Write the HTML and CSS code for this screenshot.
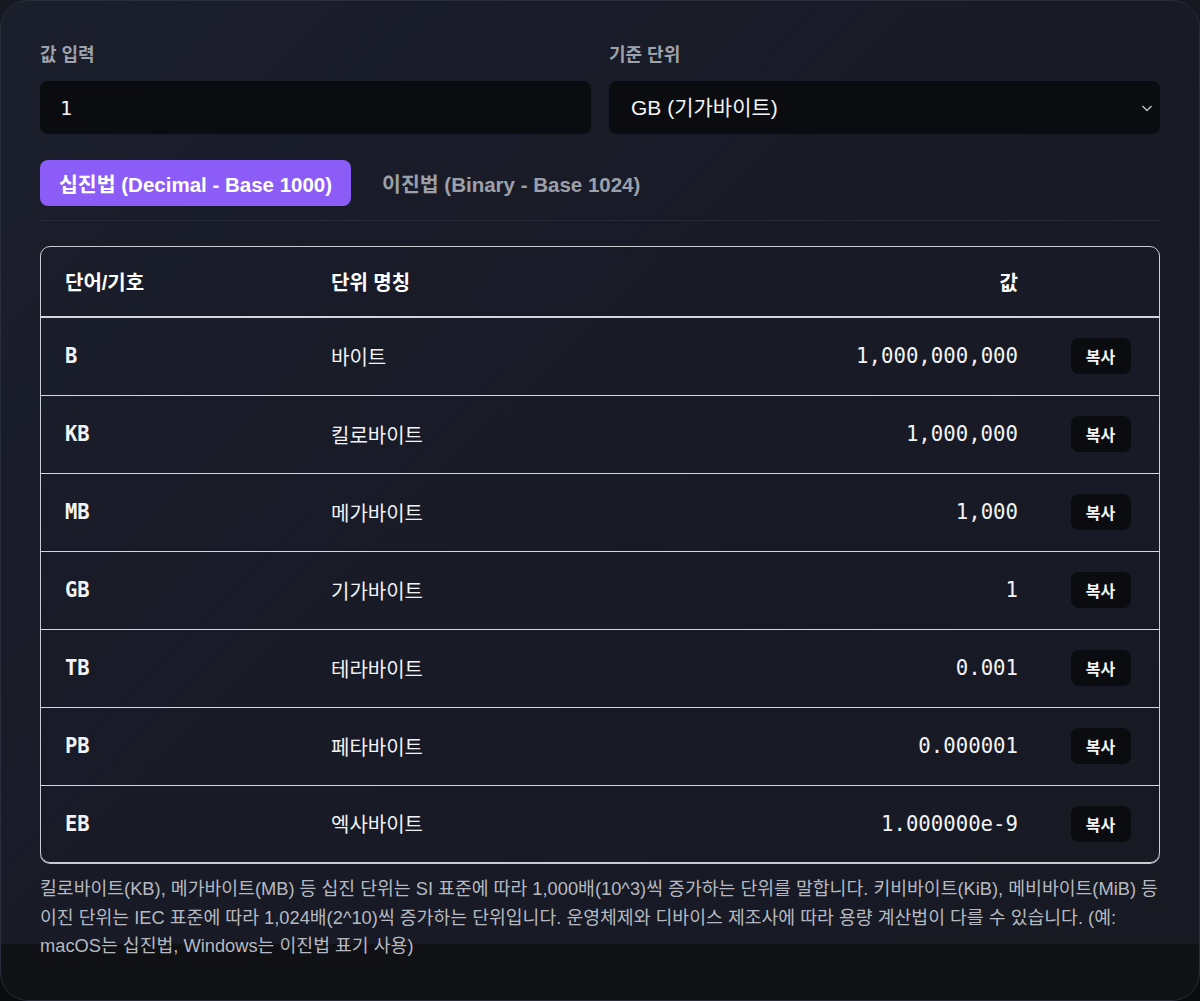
FILE: index.html
```html
<!DOCTYPE html>
<html lang="ko">
<head>
    <meta charset="UTF-8">
    <meta name="viewport" content="width=device-width, initial-scale=1.0">
    <title>데이터 단위 변환기</title>
    <link rel="stylesheet" href="styles.css">
</head>
<body>
    <div class="panel">
        <div class="fields">
            <div class="field">
                <label for="amount">값 입력</label>
                <input id="amount" class="control" type="text" value="1">
            </div>
            <div class="field">
                <label for="baseUnit">기준 단위</label>
                <div class="select-wrap">
                    <select id="baseUnit" class="control">
                        <option>B (바이트)</option>
                        <option>KB (킬로바이트)</option>
                        <option>MB (메가바이트)</option>
                        <option selected>GB (기가바이트)</option>
                        <option>TB (테라바이트)</option>
                        <option>PB (페타바이트)</option>
                        <option>EB (엑사바이트)</option>
                    </select>
                    <svg class="chevron" width="14" height="14" viewBox="0 0 14 14"><path d="M2.5 5 L7 9.5 L11.5 5" fill="none" stroke="#c4c6cc" stroke-width="1.3"/></svg>
                </div>
            </div>
        </div>

        <div class="tabs">
            <button class="tab active">십진법 (Decimal - Base 1000)</button>
            <button class="tab">이진법 (Binary - Base 1024)</button>
        </div>

        <div class="table-wrap">
            <table>
                <thead>
                    <tr>
                        <th class="col-sym">단어/기호</th>
                        <th class="col-name">단위 명칭</th>
                        <th class="col-val">값</th>
                        <th class="col-copy"></th>
                    </tr>
                </thead>
                <tbody>
                    <tr><td class="sym">B</td><td>바이트</td><td class="val">1,000,000,000</td><td class="copy"><button>복사</button></td></tr>
                    <tr><td class="sym">KB</td><td>킬로바이트</td><td class="val">1,000,000</td><td class="copy"><button>복사</button></td></tr>
                    <tr><td class="sym">MB</td><td>메가바이트</td><td class="val">1,000</td><td class="copy"><button>복사</button></td></tr>
                    <tr><td class="sym">GB</td><td>기가바이트</td><td class="val">1</td><td class="copy"><button>복사</button></td></tr>
                    <tr><td class="sym">TB</td><td>테라바이트</td><td class="val">0.001</td><td class="copy"><button>복사</button></td></tr>
                    <tr><td class="sym">PB</td><td>페타바이트</td><td class="val">0.000001</td><td class="copy"><button>복사</button></td></tr>
                    <tr><td class="sym">EB</td><td>엑사바이트</td><td class="val">1.000000e-9</td><td class="copy"><button>복사</button></td></tr>
                </tbody>
            </table>
        </div>

        <p class="note">킬로바이트(KB), 메가바이트(MB) 등 십진 단위는 SI 표준에 따라 1,000배(10^3)씩 증가하는 단위를 말합니다. 키비바이트(KiB), 메비바이트(MiB) 등 이진 단위는 IEC 표준에 따라 1,024배(2^10)씩 증가하는 단위입니다. 운영체제와 디바이스 제조사에 따라 용량 계산법이 다를 수 있습니다. (예: macOS는 십진법, Windows는 이진법 표기 사용)</p>
    </div>
</body>
</html>
```

FILE: styles.css
```css
* {
    box-sizing: border-box;
}
body {
    margin: 0;
    background: linear-gradient(#171922, #0b0c0f);
    font-family: "Liberation Sans", "Noto Sans CJK KR", sans-serif;
    color: #f2f3f5;
}
.panel {
    height: 1001px;
    border: 1px solid #2a2d3a;
    border-radius: 28px;
    padding: 42px 39px 0;
    background-color: #101115;
    background-image: linear-gradient(135deg, #1b1e2b 0%, #181b26 50%, #171a23 100%);
    background-size: 100% 943px;
    background-repeat: no-repeat;
}
.fields {
    display: grid;
    grid-template-columns: 1fr 1fr;
    gap: 18px;
}
.field label {
    display: block;
    font-size: 18px;
    font-weight: bold;
    line-height: 24px;
    color: #9ea2ad;
    margin-bottom: 14px;
}
.control {
    display: block;
    width: 100%;
    height: 53px;
    border: none;
    border-radius: 8px;
    background: #0b0c10;
    color: #f4f5f7;
    font-family: "Liberation Sans", "Noto Sans CJK KR", sans-serif;
    font-size: 21px;
    padding: 0 20px;
    outline: none;
}
#amount {
    font-family: "DejaVu Sans Mono", monospace;
    font-size: 20px;
}
select.control {
    appearance: none;
    -webkit-appearance: none;
    padding: 0 22px;
}
.select-wrap {
    position: relative;
}
.chevron {
    position: absolute;
    right: 6px;
    top: 20px;
    pointer-events: none;
}
.tabs {
    display: flex;
    gap: 12px;
    margin-top: 26px;
    padding-bottom: 14px;
    border-bottom: 1px solid #272a36;
}
.tab {
    height: 46px;
    padding: 0 19px;
    border: none;
    border-radius: 8px;
    background: transparent;
    color: #9ca0aa;
    font-family: "Liberation Sans", "Noto Sans CJK KR", sans-serif;
    font-size: 20.5px;
    font-weight: bold;
    cursor: pointer;
}
.tab.active {
    background: #8b5cf6;
    color: #ffffff;
}
.table-wrap {
    margin-top: 25px;
    border: 1px solid #c9cbd2;
    border-radius: 10px;
    overflow: hidden;
    box-shadow: 0 1px 0 #c9cbd2;
}
table {
    width: 100%;
    border-collapse: collapse;
}
th, td {
    padding: 0 24px;
    text-align: left;
}
th {
    height: 70px;
    font-size: 20px;
    font-weight: bold;
    color: #ffffff;
    border-bottom: 2px solid #d4d6dc;
}
td {
    height: 78px;
    font-size: 20px;
    color: #f2f3f5;
    border-bottom: 1px solid #d4d6dc;
}
tbody tr:last-child td {
    border-bottom: none;
    height: 77px;
}
.col-sym {
    width: 266px;
}
.col-name {
    width: 380px;
}
.col-copy {
    width: 117px;
}
.col-val, .val {
    text-align: right;
}
.sym {
    font-family: "DejaVu Sans Mono", monospace;
    font-weight: bold;
    font-size: 20.5px;
}
.val {
    font-family: "DejaVu Sans Mono", monospace;
    font-size: 20.7px;
}
.copy {
    padding: 0;
    text-align: center;
}
.copy button {
    width: 60px;
    height: 36px;
    border: none;
    border-radius: 8px;
    background: #0b0c0f;
    color: #f4f5f7;
    font-family: "Noto Sans CJK KR", sans-serif;
    font-size: 16px;
    font-weight: bold;
    cursor: pointer;
}
.note {
    margin: 12px 0 0;
    font-size: 18.3px;
    line-height: 28.5px;
    color: #b6b9c1;
}
```
